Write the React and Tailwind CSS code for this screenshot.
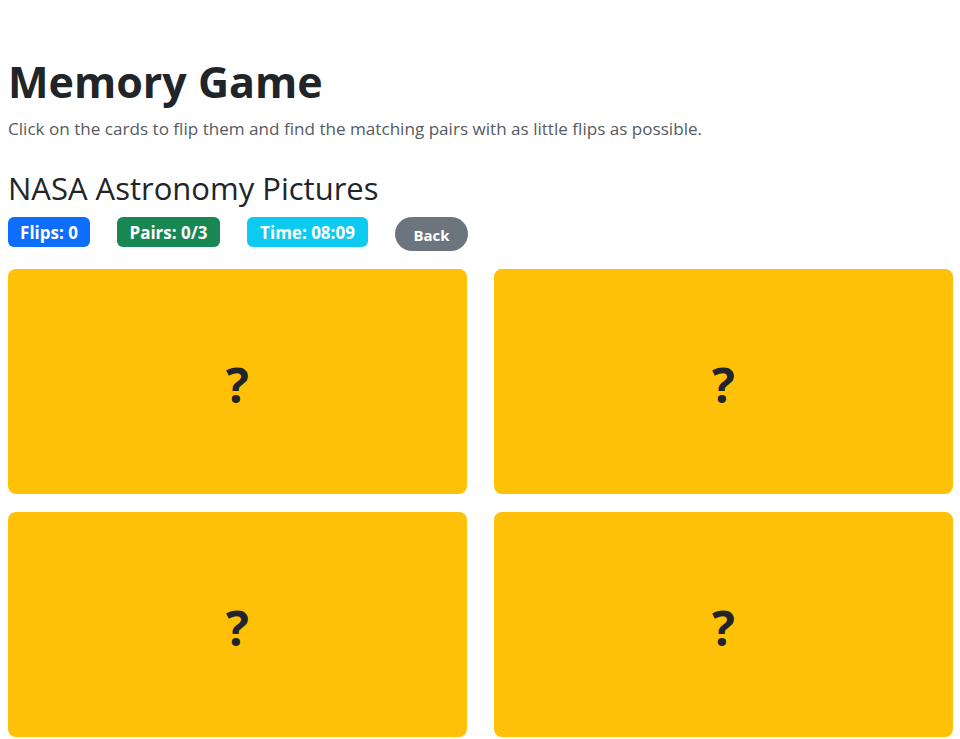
export default function App() {
  const cards = [0, 1, 2, 3];
  return (
    <div className="min-h-screen bg-white text-[#212529]" style={{ fontFamily: '"Open Sans", "Noto Sans", sans-serif' }}>
      <div className="w-[953px] pl-2 pt-[56px]">
        <h1 className="text-[43px] font-bold leading-[1.2]">Memory Game</h1>
        <p className="mt-[8px] text-[17.1px] leading-[1.5] text-[#555b61]">
          Click on the cards to flip them and find the matching pairs with as little flips as possible.
        </p>
        <h2 className="mt-[29px] text-[31px] font-medium leading-[1.2]">NASA Astronomy Pictures</h2>
        <div className="mt-[10px] flex items-start gap-[27px]">
          <span className="flex h-[30px] w-[82px] items-center justify-center rounded-[6px] bg-[#0d6efd] text-[17px] font-bold text-white">Flips: 0</span>
          <span className="flex h-[30px] w-[103px] items-center justify-center rounded-[6px] bg-[#198754] text-[17px] font-bold text-white">Pairs: 0/3</span>
          <span className="flex h-[30px] w-[121px] items-center justify-center rounded-[6px] bg-[#0dcaf0] text-[17px] font-bold text-white">Time: 08:09</span>
          <button className="flex h-[34px] w-[73px] items-center justify-center rounded-full bg-[#6c757d] pt-[2px] text-[15px] font-bold text-white">Back</button>
        </div>
        <div className="mt-[18px] grid grid-cols-2 gap-x-[27px] gap-y-[18px]">
          {cards.map((c) => (
            <div key={c} className="flex h-[225px] items-center justify-center rounded-[8px] bg-[#ffc107]">
              <span className="pt-[6px] text-[48px] font-bold leading-none text-[#212529]">?</span>
            </div>
          ))}
        </div>
      </div>
    </div>
  );
}
